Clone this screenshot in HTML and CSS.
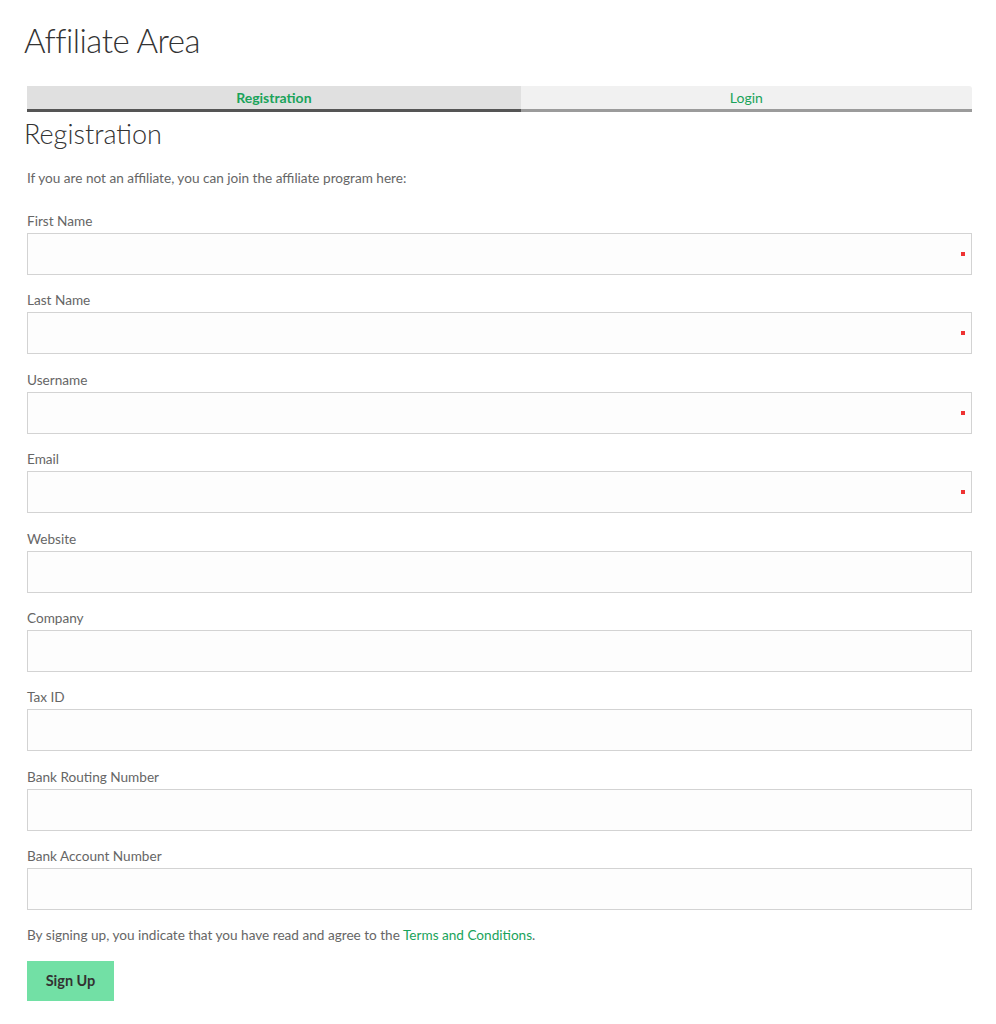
FILE: index.html
```html
<!DOCTYPE html>
<html lang="en">

<head>
    <meta charset="UTF-8">
    <meta name="viewport" content="width=device-width, initial-scale=1.0">
    <title>Affiliate Area</title>
    <link rel="stylesheet" href="styles.css">
</head>

<body>
    <main class="page">
        <h1 class="page-title">Affiliate Area</h1>

        <nav class="tabs">
            <a class="tab tab-active" href="#">Registration</a>
            <a class="tab" href="#">Login</a>
        </nav>

        <h2 class="section-title">Registration</h2>
        <p class="intro">If you are not an affiliate, you can join the affiliate program here:</p>

        <form class="reg-form">
            <div class="field">
                <label for="first_name">First Name</label>
                <div class="input-wrap required"><input type="text" id="first_name"></div>
            </div>
            <div class="field">
                <label for="last_name">Last Name</label>
                <div class="input-wrap required"><input type="text" id="last_name"></div>
            </div>
            <div class="field">
                <label for="user_login">Username</label>
                <div class="input-wrap required"><input type="text" id="user_login"></div>
            </div>
            <div class="field">
                <label for="user_email">Email</label>
                <div class="input-wrap required"><input type="email" id="user_email"></div>
            </div>
            <div class="field">
                <label for="url">Website</label>
                <div class="input-wrap"><input type="text" id="url"></div>
            </div>
            <div class="field">
                <label for="company">Company</label>
                <div class="input-wrap"><input type="text" id="company"></div>
            </div>
            <div class="field">
                <label for="tax_id">Tax ID</label>
                <div class="input-wrap"><input type="text" id="tax_id"></div>
            </div>
            <div class="field">
                <label for="routing">Bank Routing Number</label>
                <div class="input-wrap"><input type="text" id="routing"></div>
            </div>
            <div class="field">
                <label for="account">Bank Account Number</label>
                <div class="input-wrap"><input type="text" id="account"></div>
            </div>

            <p class="terms">By signing up, you indicate that you have read and agree to the <a href="#">Terms and Conditions</a>.</p>

            <button type="button" class="btn-signup">Sign Up</button>
        </form>
    </main>
</body>

</html>
```

FILE: styles.css
```css
* {
    margin: 0;
    padding: 0;
    box-sizing: border-box;
}

body {
    font-family: 'Lato', 'Liberation Sans', sans-serif;
    background-color: #fff;
    color: #666;
}

.page {
    padding: 18px 24px 0 27px;
}

.page-title {
    font-size: 33px;
    font-weight: 300;
    color: #333;
    line-height: 44px;
    margin-left: -3px;
    letter-spacing: -0.5px;
}

.tabs {
    display: flex;
    margin-top: 24px;
}

.tab {
    flex: 1 1 auto;
    text-align: center;
    font-size: 14px;
    line-height: 23px;
    color: #1aa35a;
    text-decoration: none;
    background-color: #f1f1f1;
    border-bottom: 3px solid #9b9b9b;
}

.tab-active {
    background-color: #e0e0e0;
    border-bottom-color: #555;
    font-weight: bold;
}

.tab:last-child {
    border-top-right-radius: 3px;
}

.section-title {
    font-size: 27px;
    font-weight: 300;
    color: #333;
    line-height: 36px;
    margin: 4px 0 0 -3px;
}

.intro {
    font-size: 13.6px;
    line-height: 20px;
    margin-top: 16px;
}

.reg-form {
    margin-top: 23px;
}

.field {
    margin-bottom: 15.4px;
}

.field label {
    display: block;
    font-size: 13.6px;
    line-height: 20px;
    margin-bottom: 2px;
}

.input-wrap {
    position: relative;
}

.input-wrap input {
    display: block;
    width: 100%;
    height: 42px;
    border: 1px solid #d3d3d3;
    background-color: #fdfdfd;
    padding: 0 10px;
    font-size: 14px;
}

.input-wrap.required::after {
    content: "";
    position: absolute;
    right: 7px;
    top: 19px;
    width: 4px;
    height: 4px;
    background-color: #e33;
}

.terms {
    font-size: 13.6px;
    line-height: 20px;
    margin-top: -1px;
}

.terms a {
    color: #1aa35a;
    text-decoration: none;
}

.btn-signup {
    margin-top: 16px;
    width: 87px;
    height: 40px;
    border: none;
    background-color: #72e0a5;
    color: #333;
    font-family: inherit;
    font-size: 14.5px;
    font-weight: bold;
}
```
